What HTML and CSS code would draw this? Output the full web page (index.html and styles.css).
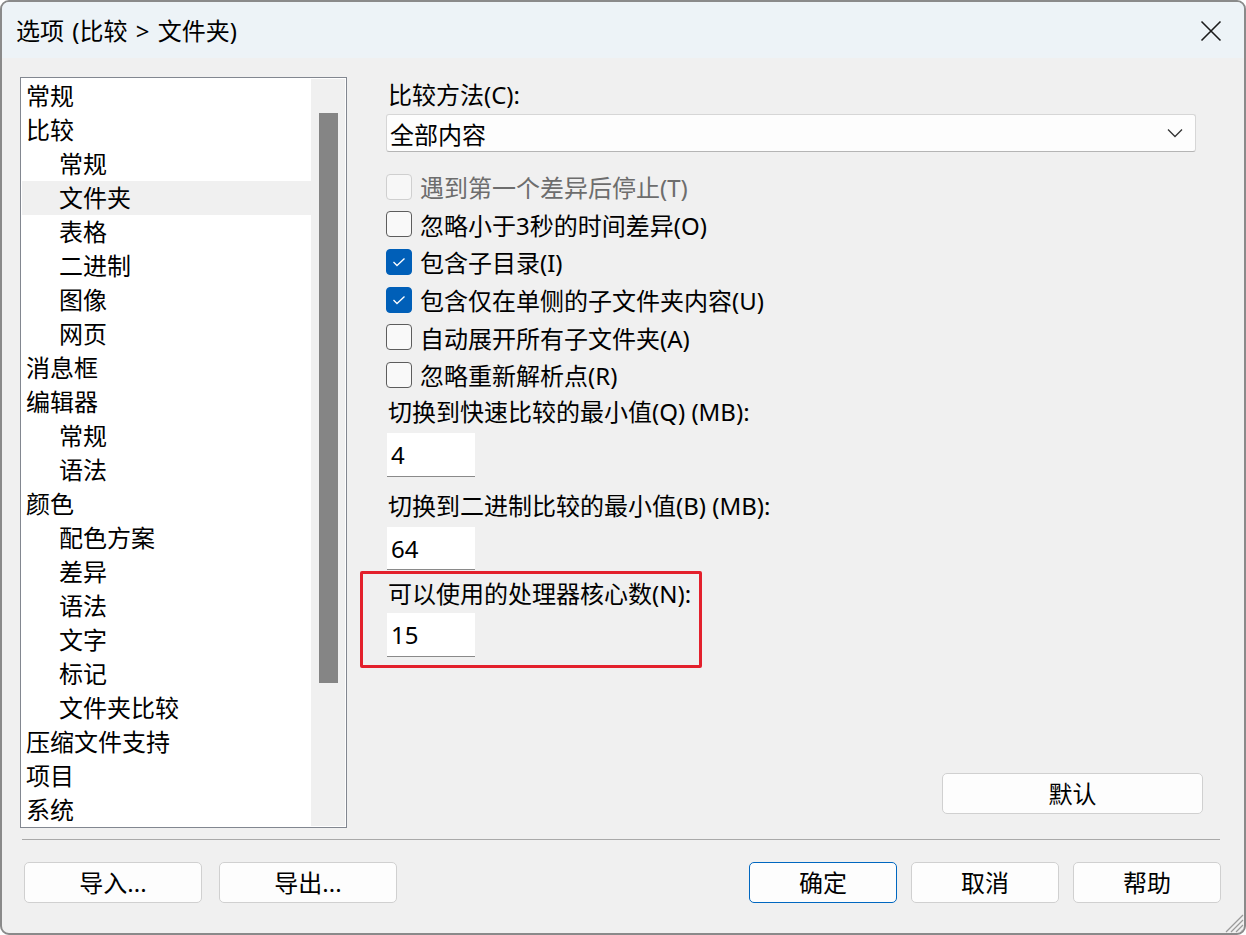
FILE: index.html
```html
<!DOCTYPE html>
<html lang="zh-CN">
<head>
    <meta charset="UTF-8">
    <title>选项 (比较 &gt; 文件夹)</title>
    <link rel="stylesheet" href="styles.css">
</head>
<body>
    <div class="window">
        <div class="titlebar">
            <span class="title">选项 (比较 &gt; 文件夹)</span>
            <svg class="close" width="22" height="22" viewBox="0 0 22 22">
                <path d="M1.5 1.5 L20.5 20.5 M20.5 1.5 L1.5 20.5" stroke="#1b1b1b" stroke-width="1.6" fill="none"/>
            </svg>
        </div>

        <div class="main">
            <div class="tree">
                <ul class="tree-list">
                    <li>常规</li>
                    <li>比较</li>
                    <li class="sub">常规</li>
                    <li class="sub selected">文件夹</li>
                    <li class="sub">表格</li>
                    <li class="sub">二进制</li>
                    <li class="sub">图像</li>
                    <li class="sub">网页</li>
                    <li>消息框</li>
                    <li>编辑器</li>
                    <li class="sub">常规</li>
                    <li class="sub">语法</li>
                    <li>颜色</li>
                    <li class="sub">配色方案</li>
                    <li class="sub">差异</li>
                    <li class="sub">语法</li>
                    <li class="sub">文字</li>
                    <li class="sub">标记</li>
                    <li class="sub">文件夹比较</li>
                    <li>压缩文件支持</li>
                    <li>项目</li>
                    <li>系统</li>
                </ul>
                <div class="scrollbar"><div class="thumb"></div></div>
            </div>

            <div class="panel">
                <div class="label first">比较方法(C):</div>
                <div class="select">
                    <span>全部内容</span>
                    <svg width="16" height="10" viewBox="0 0 16 10">
                        <path d="M1 1.5 L8 8.5 L15 1.5" stroke="#333" stroke-width="1.3" fill="none"/>
                    </svg>
                </div>

                <div class="checks">
                    <div class="check disabled"><span class="box"></span>遇到第一个差异后停止(T)</div>
                    <div class="check"><span class="box"></span>忽略小于3秒的时间差异(O)</div>
                    <div class="check"><span class="box on"><svg width="14" height="10" viewBox="0 0 14 10"><path d="M1.5 5 L5 8.5 L12.5 1.5" stroke="#fff" stroke-width="1.3" fill="none"/></svg></span>包含子目录(I)</div>
                    <div class="check"><span class="box on"><svg width="14" height="10" viewBox="0 0 14 10"><path d="M1.5 5 L5 8.5 L12.5 1.5" stroke="#fff" stroke-width="1.3" fill="none"/></svg></span>包含仅在单侧的子文件夹内容(U)</div>
                    <div class="check"><span class="box"></span>自动展开所有子文件夹(A)</div>
                    <div class="check"><span class="box"></span>忽略重新解析点(R)</div>
                </div>

                <div class="label q">切换到快速比较的最小值(Q) (MB):</div>
                <div class="field f1">4</div>
                <div class="label b">切换到二进制比较的最小值(B) (MB):</div>
                <div class="field f2">64</div>
                <div class="label n">可以使用的处理器核心数(N):</div>
                <div class="field f3">15</div>
                <div class="highlight"></div>

                <button class="btn default-btn">默认</button>
            </div>
        </div>

        <div class="separator"></div>

        <div class="footer">
            <div class="group left">
                <button class="btn wide">导入...</button>
                <button class="btn wide">导出...</button>
            </div>
            <div class="group right">
                <button class="btn primary">确定</button>
                <button class="btn">取消</button>
                <button class="btn">帮助</button>
            </div>
        </div>

        <svg class="grip" width="24" height="24" viewBox="0 0 24 24">
            <path d="M23 6 L6 23 M23 11 L11 23 M23 16 L16 23 M23 21 L21 23" stroke="#9a9a9a" stroke-width="1.2" fill="none"/>
        </svg>
    </div>
</body>
</html>
```

FILE: styles.css
```css
html, body {
    margin: 0;
    padding: 0;
    background: #ffffff;
}

body {
    font-family: "Noto Sans", "Noto Sans CJK SC", sans-serif;
    font-size: 24px;
    color: #000;
}

.window {
    position: relative;
    box-sizing: border-box;
    width: 1246px;
    height: 935px;
    border: 2px solid #8a8a8a;
    border-radius: 9px;
    background: #f0f0f0;
    overflow: hidden;
}

.titlebar {
    height: 56px;
    background: #edf3f7;
    display: flex;
    align-items: center;
    justify-content: space-between;
    padding: 0 22px 0 14px;
}

.title {
    font-size: 24px;
    line-height: 30px;
    margin-top: 1px;
    word-spacing: 2px;
}

.close {
    margin-top: 2px;
}

.main {
    display: flex;
    padding: 19px 0 0 18px;
    height: 751px;
}

.tree {
    box-sizing: border-box;
    width: 327px;
    height: 751px;
    border: 1px solid #828790;
    background: #fff;
    padding: 1px;
    display: flex;
}

.tree-list {
    list-style: none;
    margin: 0;
    padding: 0;
    flex: 1;
}

.tree-list li {
    height: 34px;
    line-height: 34px;
    padding-left: 4px;
    white-space: nowrap;
}

.tree-list li.sub {
    padding-left: 37px;
}

.tree-list li.selected {
    background: #f0f0f0;
}

.scrollbar {
    width: 34px;
    background: #f0f0f0;
    padding-top: 34px;
    box-sizing: border-box;
}

.thumb {
    width: 19px;
    height: 570px;
    margin-left: 8px;
    background: #858585;
}

.panel {
    position: relative;
    display: flex;
    flex-direction: column;
    margin-left: 39px;
    width: 817px;
    height: 751px;
}

.label {
    height: 36px;
    line-height: 36px;
    padding-left: 2px;
    white-space: nowrap;
}

.label.b { margin-top: 11px; }
.label.n { margin-top: 6px; }

.select {
    box-sizing: border-box;
    width: 810px;
    height: 38px;
    margin-top: 1px;
    background: #fdfdfd;
    border: 1px solid #d6d6d6;
    border-bottom-color: #b5b5b5;
    border-radius: 3px;
    display: flex;
    align-items: center;
    justify-content: space-between;
    padding: 0 12px 0 3px;
}

.checks {
    margin-top: 16px;
    display: flex;
    flex-direction: column;
}

.check {
    height: 37.6px;
    display: flex;
    align-items: center;
    gap: 8px;
    white-space: nowrap;
}

.check.disabled {
    color: #6d6d6d;
}

.box {
    box-sizing: border-box;
    width: 26px;
    height: 26px;
    border: 1.5px solid #5d5d5d;
    border-radius: 4px;
    background: #f9f9f9;
    display: flex;
    align-items: center;
    justify-content: center;
}

.check.disabled .box {
    border-color: #cfcfcf;
    background: #f7f7f7;
}

.box.on {
    background: #005fb8;
    border-color: #005fb8;
}

.field {
    box-sizing: border-box;
    width: 88px;
    height: 44px;
    margin-left: 1px;
    background: #fff;
    border-bottom: 1px solid #8a8a8a;
    padding-left: 4px;
    line-height: 44px;
}

.field.f1 { margin-top: 3px; }
.field.f2 { margin-top: 3px; height: 43px; line-height: 43px; }
.field.f3 { margin-top: 1px; }

.highlight {
    position: absolute;
    left: -26px;
    top: 494px;
    width: 336px;
    height: 91px;
    border: 3px solid #e3202c;
    border-radius: 2px;
}

.btn {
    font-family: inherit;
    font-size: 24px;
    color: #000;
    background: #fdfdfd;
    border: 1px solid #d0d0d0;
    border-radius: 5px;
    height: 41px;
    width: 148px;
    padding: 0;
    line-height: 38px;
}

.default-btn {
    width: 261px;
    align-self: flex-end;
    margin-top: auto;
    margin-bottom: 14px;
}

.separator {
    height: 1px;
    margin: 11px 24px 0 20px;
    background: #a9a9a9;
}

.footer {
    display: flex;
    align-items: center;
    justify-content: space-between;
    padding: 22px 23px 0 22px;
}

.group {
    display: flex;
}

.group.left {
    gap: 17px;
}

.group.right {
    gap: 14px;
}

.btn.wide {
    width: 178px;
}

.btn.primary {
    border: 1px solid #0067c0;
}

.grip {
    position: absolute;
    right: 0;
    bottom: 0;
}
```
